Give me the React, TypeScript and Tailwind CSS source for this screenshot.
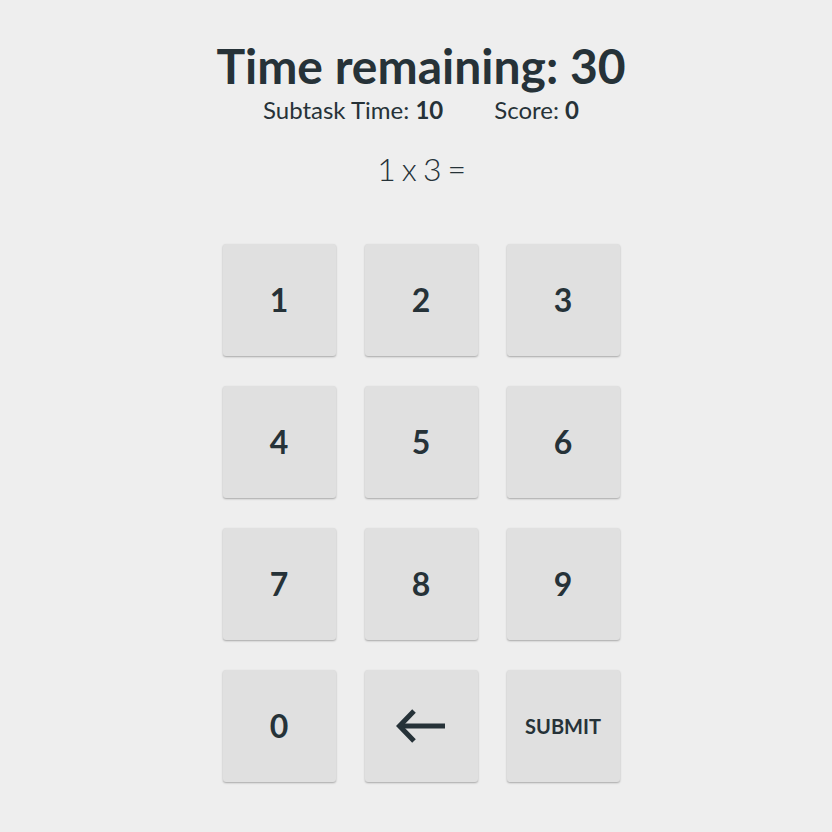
const keys = ["1", "2", "3", "4", "5", "6", "7", "8", "9", "0", "back", "SUBMIT"];

function BackArrow() {
  return (
    <svg width="50" height="34" viewBox="0 0 50 34" fill="none">
      <path d="M49 17H4" stroke="#263238" strokeWidth="5" />
      <path d="M18 2L3.5 17L18 32" stroke="#263238" strokeWidth="5" />
    </svg>
  );
}

function Key({ label }: { label: string }) {
  return (
    <button className="flex items-center justify-center bg-[#e0e0e0] rounded-[3px] shadow-[0_1px_2px_rgba(0,0,0,0.3)] h-[112px] w-[113px] text-[#263238]">
      {label === "back" ? (
        <BackArrow />
      ) : label === "SUBMIT" ? (
        <span className="text-[20px] font-bold leading-none">SUBMIT</span>
      ) : (
        <span className="text-[32px] font-bold leading-none">{label}</span>
      )}
    </button>
  );
}

export default function App() {
  return (
    <div className="min-h-[832px] bg-[#eeeeee] text-[#263238] font-['Lato',sans-serif] flex flex-col items-center pl-[10px] pt-[42px]">
      <h1 className="text-[48px] font-bold leading-[48px]">Time remaining: 30</h1>

      <div className="mt-[8px] flex gap-[51px] text-[24px] leading-[24px]">
        <span>
          Subtask Time: <b>10</b>
        </span>
        <span>
          Score: <b>0</b>
        </span>
      </div>

      <p className="mt-[31px] text-[32px] font-light leading-[32px] tracking-[-1.3px]">1 x 3 =</p>

      <div className="mt-[59px] grid grid-cols-[113px_113px_113px] gap-x-[29px] gap-y-[30px]">
        {keys.map((k) => (
          <Key key={k} label={k} />
        ))}
      </div>
    </div>
  );
}
